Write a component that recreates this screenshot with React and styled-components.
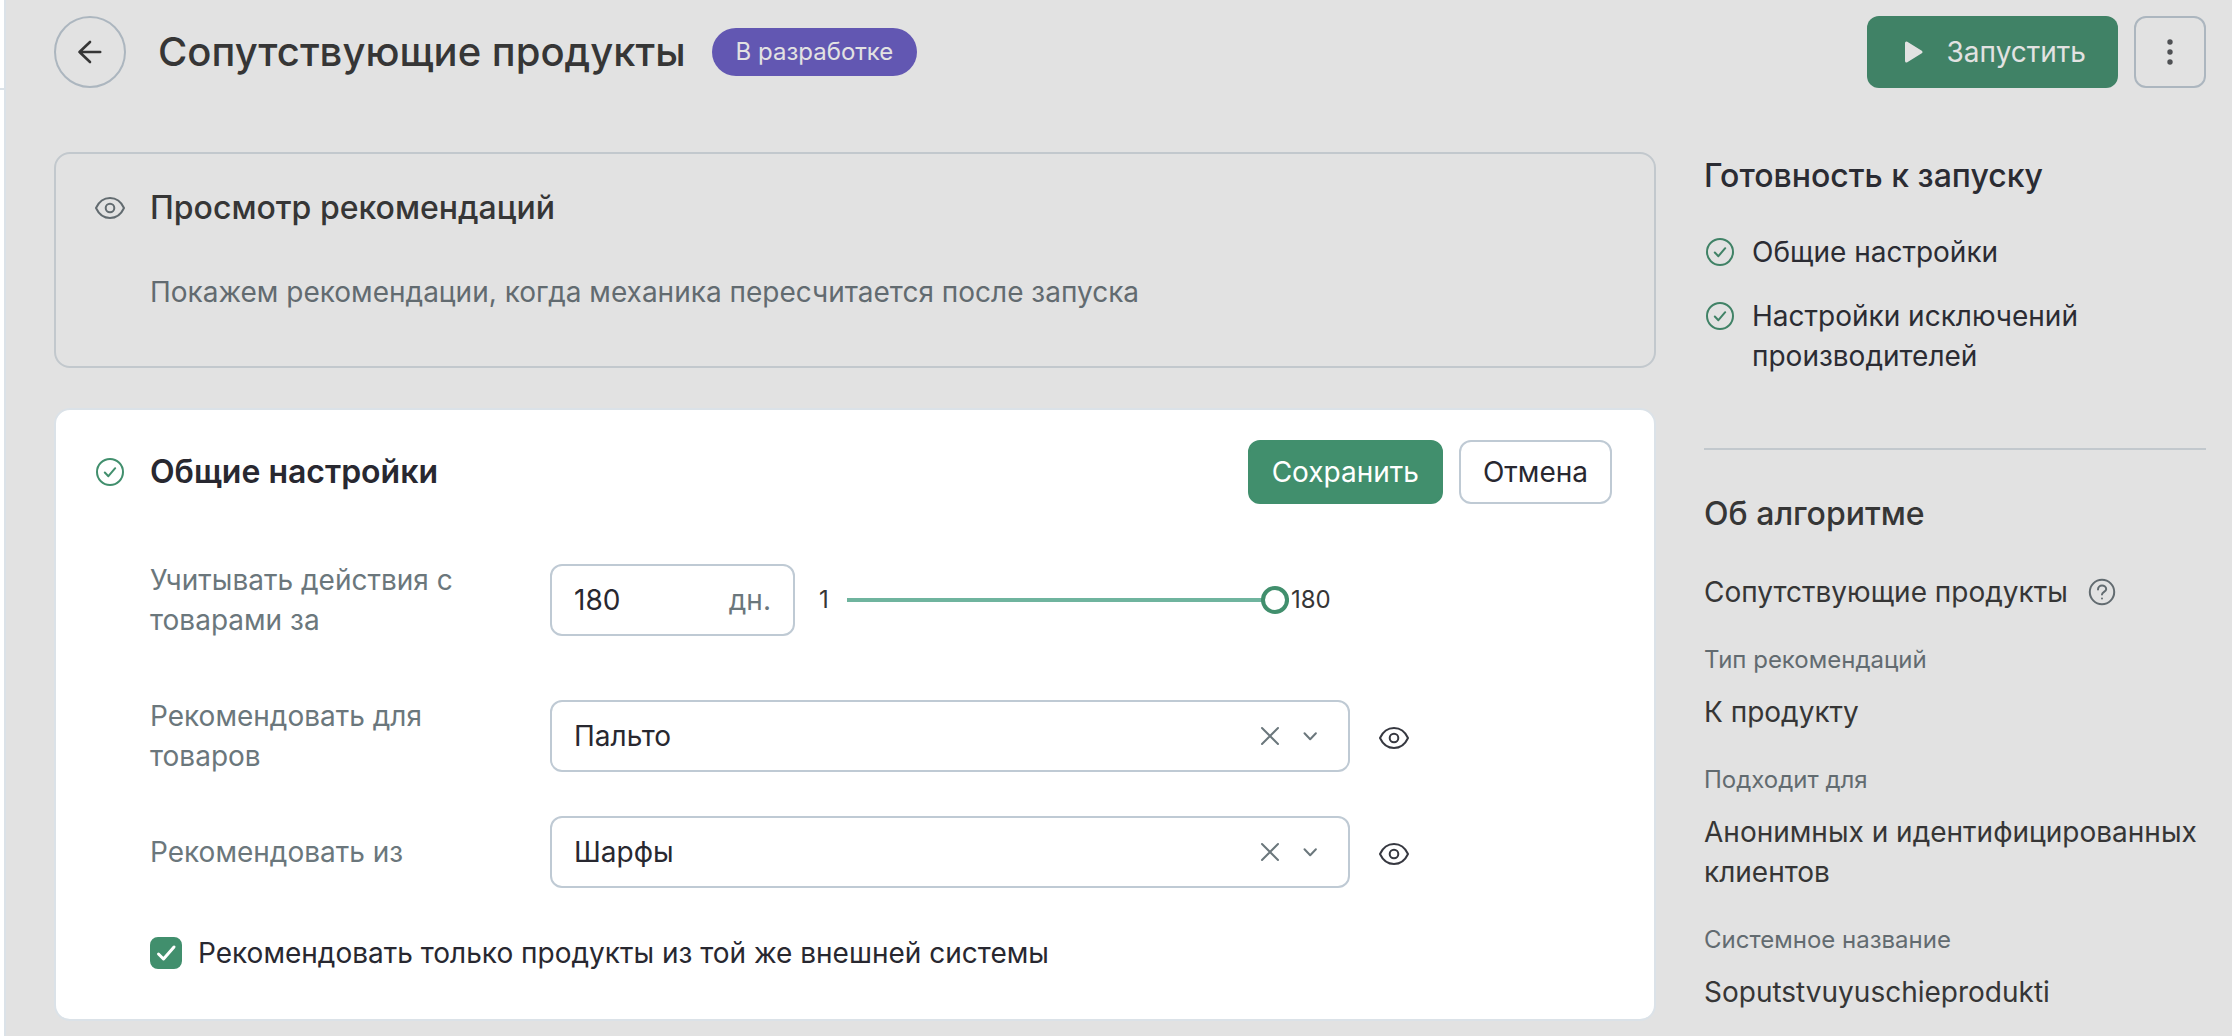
import React, { useState } from 'react';
import styled, { createGlobalStyle } from 'styled-components';

const GlobalStyle = createGlobalStyle`
* {
    box-sizing: border-box;
}
body {
    margin: 0;
    background-color: #e2e2e2;
    color: #363636;
    font-family: 'Inter', 'Liberation Sans', sans-serif;
    font-size: 28px;
    line-height: 40px;
}
h1, h2, p, ul, dl, dd {
    margin: 0;
    padding: 0;
}
button, input, select {
    font: inherit;
    color: inherit;
    margin: 0;
}
button {
    cursor: pointer;
}
svg {
    display: block;
    flex: none;
}
`;

const Shell = styled.div`
    display: flex;
    min-height: 100vh;
`;

const Rail = styled.div`
    flex: none;
    width: 6px;
    background-color: #ffffff;
    border-right: 2px solid #dbe2e8;
`;

const RailTop = styled.div`
    height: 90px;
    border-bottom: 2px solid #dbe2e8;
`;

const Page = styled.div`
    flex: 1;
    min-width: 0;
    padding: 16px 26px 0 48px;
`;

const Header = styled.header`
    display: flex;
    align-items: center;
    margin-bottom: 64px;
`;

const BackButton = styled.button`
    display: flex;
    align-items: center;
    justify-content: center;
    width: 72px;
    height: 72px;
    margin-right: 32px;
    padding: 0;
    background: none;
    border: 2px solid #acb6bf;
    border-radius: 50%;
`;

const PageTitle = styled.h1`
    font-size: 40px;
    line-height: 48px;
    font-weight: 500;
`;

const Badge = styled.span`
    margin-left: 26px;
    padding: 0 24px;
    border-radius: 24px;
    background-color: #6257b2;
    color: #e2e2e2;
    font-size: 24px;
    line-height: 48px;
`;

const HeaderActions = styled.div`
    display: flex;
    gap: 16px;
    margin-left: auto;
`;

const LaunchButton = styled.button`
    display: flex;
    align-items: center;
    gap: 16px;
    height: 72px;
    padding: 0 32px;
    border: none;
    border-radius: 12px;
    background-color: #408266;
    color: #e2e2e2;
`;

const MenuButton = styled.button`
    display: flex;
    align-items: center;
    justify-content: center;
    width: 72px;
    height: 72px;
    padding: 0;
    background: none;
    border: 2px solid #acb6bf;
    border-radius: 12px;
`;

const Columns = styled.div`
    display: grid;
    grid-template-columns: minmax(0, 1fr) 502px;
    column-gap: 48px;
    align-items: start;
`;

const Cards = styled.main`
    display: grid;
    gap: 40px;
`;

const Card = styled.section`
    padding: 30px 42px 46px 38px;
    border: 2px solid ${props => (props.$active ? '#dbe2e8' : '#c2c8cd')};
    border-radius: 16px;
    background-color: ${props => (props.$active ? '#ffffff' : 'transparent')};
    color: ${props => (props.$active ? '#282830' : '#363636')};
`;

const CardHead = styled.div`
    display: flex;
    align-items: center;
    gap: 24px;
    min-height: 48px;
`;

const CardTitle = styled.h2`
    font-size: 32px;
    line-height: 40px;
    font-weight: ${props => (props.$bold ? 600 : 500)};
`;

const CardActions = styled.div`
    display: flex;
    gap: 16px;
    margin-left: auto;
`;

const ActionButton = styled.button`
    height: 64px;
    padding: 0 22px;
    border: 2px solid ${props => (props.$primary ? '#418f6d' : '#bfcad4')};
    border-radius: 12px;
    background-color: ${props => (props.$primary ? '#418f6d' : '#ffffff')};
    color: ${props => (props.$primary ? '#ffffff' : '#282830')};
`;

const PreviewText = styled.p`
    padding: 40px 0 8px 56px;
    color: #626b70;
`;

const Form = styled.form`
    display: grid;
    gap: 40px;
    padding: 56px 0 0 56px;
`;

const Row = styled.div`
    display: grid;
    grid-template-columns: 400px minmax(0, 1fr);
    align-items: center;
    margin-bottom: ${props => (props.$spaced ? '16px' : '0')};
`;

const RowLabel = styled.label`
    padding-right: 32px;
    color: #6b777c;
`;

const Controls = styled.div`
    display: flex;
    align-items: center;
`;

const DaysField = styled.div`
    display: flex;
    align-items: center;
    width: 245px;
    height: 72px;
    padding: 0 22px;
    border: 2px solid #bfcad4;
    border-radius: 12px;

    input {
        flex: 1;
        min-width: 0;
        padding: 0;
        border: none;
        outline: none;
        background: none;
    }
    span {
        color: #6b777c;
    }
`;

const RangeBound = styled.span`
    font-size: 24px;
    line-height: 32px;
    color: #363636;
`;

const MinBound = styled(RangeBound)`
    width: 28px;
    margin-left: 24px;
`;

const MaxBound = styled(RangeBound)`
    margin-left: 2px;
`;

const Range = styled.input`
    appearance: none;
    width: 442px;
    height: 28px;
    background: linear-gradient(#6fb49e, #6fb49e) center / 100% 4px no-repeat;
    cursor: pointer;

    &::-webkit-slider-thumb {
        appearance: none;
        width: 28px;
        height: 28px;
        border: 4px solid #418f6d;
        border-radius: 50%;
        background-color: #ffffff;
    }
`;

const SelectBox = styled.div`
    display: grid;
    grid-template-columns: minmax(0, 1fr) 32px 32px;
    column-gap: 8px;
    align-items: center;
    width: 800px;
    height: 72px;
    padding-right: 22px;
    border: 2px solid #bfcad4;
    border-radius: 12px;
    color: #6b777c;

    select {
        grid-area: 1 / 1 / 2 / -1;
        appearance: none;
        height: 68px;
        padding: 0 88px 0 22px;
        border: none;
        outline: none;
        background: none;
        color: #282830;
    }
    button {
        grid-area: 1 / 2;
    }
    > svg {
        grid-area: 1 / 3;
        pointer-events: none;
    }
`;

const IconButton = styled.button`
    display: flex;
    padding: 0;
    border: none;
    background: none;
`;

const EyeButton = styled(IconButton)`
    margin-left: 28px;
    padding-top: 4px;
`;

const CheckLabel = styled.label`
    display: flex;
    align-items: center;
    gap: 16px;
    padding-top: 5px;
    cursor: pointer;
`;

const CheckBox = styled.span`
    display: grid;

    input {
        grid-area: 1 / 1;
        appearance: none;
        width: 32px;
        height: 32px;
        border: 2px solid #bfcad4;
        border-radius: 8px;
    }
    input:checked {
        border-color: #418f6d;
        background-color: #418f6d;
    }
    svg {
        grid-area: 1 / 1;
        pointer-events: none;
    }
`;

const Aside = styled.aside`
    padding-top: 4px;
`;

const AsideTitle = styled.h2`
    font-size: 32px;
    line-height: 40px;
    font-weight: 500;
    color: ${props => (props.$dark ? '#2b2c33' : '#363636')};
`;

const ReadyList = styled.ul`
    display: grid;
    gap: 24px;
    padding: 36px 0 72px;
    border-bottom: 2px solid #c2c8cd;
    margin-bottom: 44px;
    list-style: none;
    color: #2b2c33;
`;

const ReadyItem = styled.li`
    display: flex;
    gap: 16px;

    svg {
        margin-top: 4px;
    }
`;

const AlgorithmName = styled.p`
    display: flex;
    align-items: center;
    gap: 18px;
    margin-top: 38px;
`;

const HelpButton = styled(IconButton)`
    color: #626b70;
`;

const Details = styled.dl`
    dt {
        margin: 32px 0 16px;
        font-size: 24px;
        line-height: 32px;
        color: #626b70;
    }
`;

const Icon = ({ color = 'currentColor', width = 2, children }) => (
    <svg width="32" height="32" viewBox="0 0 32 32" fill="none" stroke={color} strokeWidth={width} strokeLinecap="round" strokeLinejoin="round" aria-hidden="true">
        {children}
    </svg>
);

const EyeIcon = ({ color }) => (
    <Icon color={color}>
        <path d="M2 16C5 9.5 10.2 6 16 6s11 3.500 14 10c-3 6.500-8.200 10-14 10S5 22.500 2 16z" />
        <circle cx="16" cy="16" r="4.300" />
    </Icon>
);

const DoneIcon = ({ color }) => (
    <Icon color={color}>
        <circle cx="16" cy="16" r="13" />
        <path d="M10.800 16.500l3.600 3.700 6.800-8" />
    </Icon>
);

const details = [
    { name: 'Тип рекомендаций', value: 'К продукту' },
    { name: 'Подходит для', value: 'Анонимных и идентифицированных клиентов' },
    { name: 'Системное название', value: 'Soputstvuyuschieprodukti' },
];

const SegmentRow = ({ id, label, initial }) => {
    const [value, setValue] = useState(initial);
    return (
        <Row>
            <RowLabel htmlFor={id}>{label}</RowLabel>
            <Controls>
                <SelectBox>
                    <select id={id} value={value} onChange={e => setValue(e.target.value)}>
                        <option value=""></option>
                        <option>Пальто</option>
                        <option>Шарфы</option>
                    </select>
                    <IconButton type="button" aria-label="Очистить" onClick={() => setValue('')}>
                        <Icon><path d="M8 8l16 16M24 8L8 24" /></Icon>
                    </IconButton>
                    <Icon><path d="M10.500 13.300l5.700 6 5.700-6" /></Icon>
                </SelectBox>
                <EyeButton type="button" aria-label="Просмотр">
                    <EyeIcon color="#363840" />
                </EyeButton>
            </Controls>
        </Row>
    );
};

export default () => {
    const [days, setDays] = useState('180');
    const [sameSystem, setSameSystem] = useState(true);

    return (
        <Shell>
            <GlobalStyle />
            <Rail><RailTop /></Rail>
            <Page>
                <Header>
                    <BackButton type="button" aria-label="Назад">
                        <Icon width={2.6}><path d="M26.200 16H5.500M16 6L5.500 16 16 26" /></Icon>
                    </BackButton>
                    <PageTitle>Сопутствующие продукты</PageTitle>
                    <Badge>В разработке</Badge>
                    <HeaderActions>
                        <LaunchButton type="button">
                            <Icon width={3}>
                                <path d="M7.500 7v18l14.500-9z" fill="currentColor" />
                            </Icon>
                            Запустить
                        </LaunchButton>
                        <MenuButton type="button" aria-label="Ещё">
                            <svg width="32" height="32" viewBox="0 0 32 32" fill="#4f5154" aria-hidden="true">
                                <circle cx="16" cy="6" r="2.700" />
                                <circle cx="16" cy="16" r="2.700" />
                                <circle cx="16" cy="26" r="2.700" />
                            </svg>
                        </MenuButton>
                    </HeaderActions>
                </Header>

                <Columns>
                    <Cards>
                        <Card>
                            <CardHead>
                                <EyeIcon color="#626b70" />
                                <CardTitle>Просмотр рекомендаций</CardTitle>
                            </CardHead>
                            <PreviewText>Покажем рекомендации, когда механика пересчитается после запуска</PreviewText>
                        </Card>

                        <Card $active>
                            <CardHead>
                                <DoneIcon color="#418f6d" />
                                <CardTitle $bold>Общие настройки</CardTitle>
                                <CardActions>
                                    <ActionButton type="submit" form="settings" $primary>Сохранить</ActionButton>
                                    <ActionButton type="button">Отмена</ActionButton>
                                </CardActions>
                            </CardHead>
                            <Form id="settings" onSubmit={e => e.preventDefault()}>
                                <Row $spaced>
                                    <RowLabel htmlFor="days">Учитывать действия с товарами за</RowLabel>
                                    <Controls>
                                        <DaysField>
                                            <input id="days" type="text" inputMode="numeric" value={days} onChange={e => setDays(e.target.value)} />
                                            <span>дн.</span>
                                        </DaysField>
                                        <MinBound>1</MinBound>
                                        <Range type="range" min="1" max="180" aria-label="Количество дней" value={days} onChange={e => setDays(e.target.value)} />
                                        <MaxBound>180</MaxBound>
                                    </Controls>
                                </Row>
                                <SegmentRow id="for" label="Рекомендовать для товаров" initial="Пальто" />
                                <SegmentRow id="from" label="Рекомендовать из" initial="Шарфы" />
                                <CheckLabel>
                                    <CheckBox>
                                        <input type="checkbox" checked={sameSystem} onChange={e => setSameSystem(e.target.checked)} />
                                        <Icon color="#ffffff" width={3}><path d="M8.500 17l5 5L24 10" /></Icon>
                                    </CheckBox>
                                    Рекомендовать только продукты из той же внешней системы
                                </CheckLabel>
                            </Form>
                        </Card>
                    </Cards>

                    <Aside>
                        <AsideTitle $dark>Готовность к запуску</AsideTitle>
                        <ReadyList>
                            <ReadyItem><DoneIcon color="#408266" />Общие настройки</ReadyItem>
                            <ReadyItem><DoneIcon color="#408266" />Настройки исключений производителей</ReadyItem>
                        </ReadyList>
                        <AsideTitle>Об алгоритме</AsideTitle>
                        <AlgorithmName>
                            Сопутствующие продукты
                            <HelpButton type="button" aria-label="Справка">
                                <Icon>
                                    <circle cx="16" cy="16" r="12.200" />
                                    <path d="M12 13.500c0-2.300 1.800-4 4-4s4.200 1.600 4.200 3.700c0 2.600-4.200 2.800-4.200 5.300" />
                                    <path d="M16 22.500v.1" />
                                </Icon>
                            </HelpButton>
                        </AlgorithmName>
                        <Details>
                            {details.map(item => (
                                <React.Fragment key={item.name}>
                                    <dt>{item.name}</dt>
                                    <dd>{item.value}</dd>
                                </React.Fragment>
                            ))}
                        </Details>
                    </Aside>
                </Columns>
            </Page>
        </Shell>
    );
}
